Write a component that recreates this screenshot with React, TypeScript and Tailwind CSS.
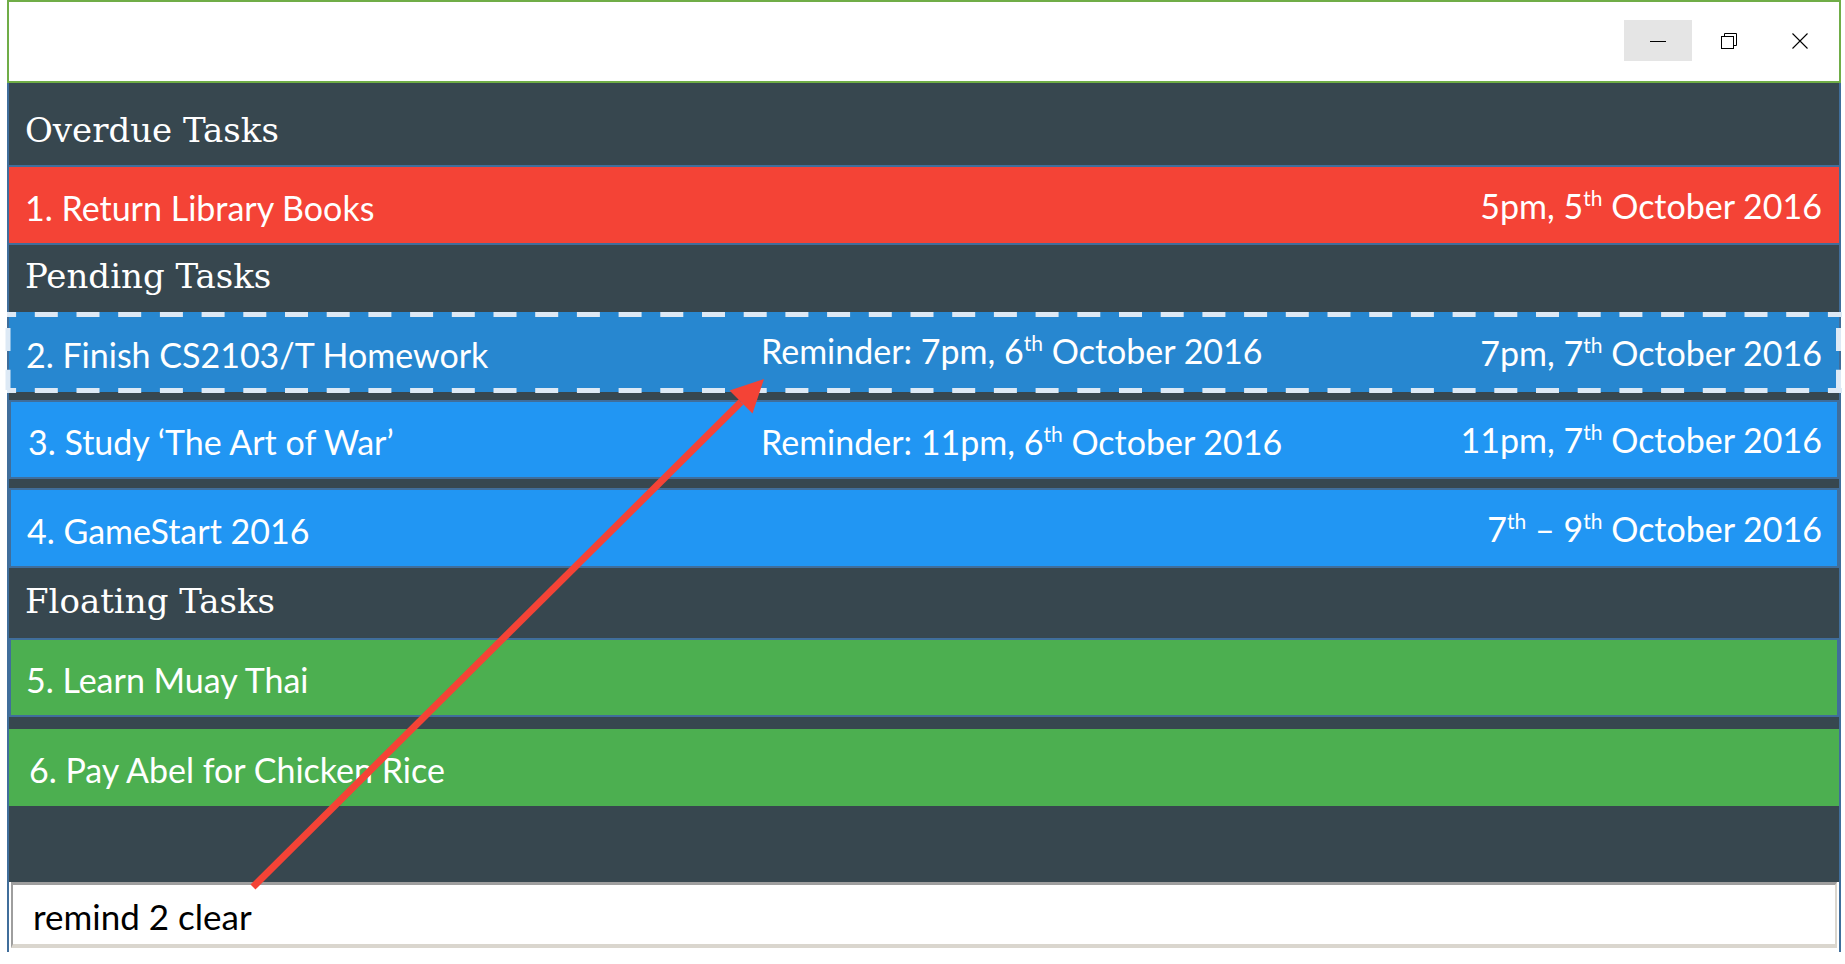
import type { ReactNode } from 'react'

const body = { fontFamily: 'Lato, "Open Sans", sans-serif' }
const slab = { fontFamily: '"DejaVu Serif", "Liberation Serif", serif' }

function Th({ children = 'th' }: { children?: ReactNode }) {
  return <sup className="text-[21px] top-[-0.6em]">{children}</sup>
}

function Header({ title, className }: { title: string; className: string }) {
  return (
    <div className={className}>
      <span className="text-[34px] text-white leading-none" style={slab}>
        {title}
      </span>
    </div>
  )
}

interface RowProps {
  className: string
  label: string
  labelWidth?: string
  reminder?: ReactNode
  due?: ReactNode
}

function Row({ className, label, labelWidth = 'w-[735px]', reminder, due }: RowProps) {
  return (
    <div className={className}>
      <span className={labelWidth + ' shrink-0 translate-y-[2px]'}>{label}</span>
      <span className="flex-1">{reminder}</span>
      <span className="text-right">{due}</span>
    </div>
  )
}

function WindowButtons() {
  return (
    <div className="flex gap-[3px] pt-[18px] pr-[5px]">
      <div className="w-[68px] h-[41px] bg-[#e5e5e5] flex items-center justify-center">
        <svg width="16" height="16" viewBox="0 0 16 16">
          <path d="M0 8.5H16" stroke="#000" strokeWidth="1" />
        </svg>
      </div>
      <div className="w-[68px] h-[41px] flex items-center justify-center">
        <svg width="16" height="16" viewBox="0 0 16 16" fill="none" stroke="#000" strokeWidth="1">
          <rect x="0.5" y="3.5" width="12" height="12" />
          <path d="M3.5 3.5V0.5H15.5V12.5H12.5" />
        </svg>
      </div>
      <div className="w-[68px] h-[41px] flex items-center justify-center">
        <svg width="16" height="16" viewBox="0 0 16 16" fill="none" stroke="#000" strokeWidth="1.1">
          <path d="M0.5 0.5L15.5 15.5M15.5 0.5L0.5 15.5" />
        </svg>
      </div>
    </div>
  )
}

function Annotations() {
  const dash = { stroke: '#dde9f5', strokeWidth: 5, strokeDasharray: '23 18.7' }
  return (
    <svg className="absolute inset-0 pointer-events-none" width="1845" height="964" viewBox="0 0 1845 964">
      <path d="M7 314.5H1842" style={{ ...dash, strokeDashoffset: 13.9 }} />
      <path d="M7 390.5H1842" style={{ ...dash, strokeDashoffset: 13.9 }} />
      <path d="M8 317V390" style={{ ...dash, strokeDashoffset: 30.7 }} />
      <path d="M1838.5 317V390" style={{ ...dash, strokeDashoffset: 30.7 }} />
      <path d="M253 887L741 402" stroke="#f44336" strokeWidth="7" />
      <polygon points="764,379 729.5,390.5 752.5,413.5" fill="#f44336" />
    </svg>
  )
}

export default function App() {
  return (
    <div className="relative w-[1845px] h-[964px] bg-white overflow-hidden" style={body}>
      <div className="ml-[7px] w-[1834px] flex flex-col">
        <div className="h-[83px] border-2 border-[#70ad47] bg-white flex justify-end items-start">
          <WindowButtons />
        </div>

        <div className="border-x-2 border-[#406e9b] bg-[#37474f] flex flex-col text-[34px] text-white">
          <Header title="Overdue Tasks" className="h-[82px] flex items-center pl-4 pt-[11px]" />
          <Row
            className="h-[80px] border-y-2 border-[#406e9b] bg-[#f44336] flex items-center pl-4 pr-[17px]"
            label="1. Return Library Books"
            due={<>5pm, 5<Th /> October 2016</>}
          />
          <Header title="Pending Tasks" className="h-[67px] flex items-center pl-4 pb-[5px]" />
          <Row
            className="h-[80px] bg-[#2787d0] flex items-center pl-[17px] pr-[17px]"
            label="2. Finish CS2103/T Homework"
            reminder={<span className="-translate-y-[2px] inline-block">Reminder: 7pm, 6<Th /> October 2016</span>}
            due={<>7pm, 7<Th /> October 2016</>}
          />
          <div className="h-[8px]" />
          <Row
            className="h-[79px] border-2 border-[#406e9b] bg-[#2196f3] flex items-center pl-[17px] pr-[15px]"
            label="3. Study ‘The Art of War’"
            labelWidth="w-[733px]"
            reminder={<span className="translate-y-[2px] inline-block">Reminder: 11pm, 6<Th /> October 2016</span>}
            due={<>11pm, 7<Th /> October 2016</>}
          />
          <div className="h-[9px]" />
          <Row
            className="h-[80px] border-2 border-[#406e9b] bg-[#2196f3] flex items-center pl-4 pr-[15px]"
            label="4. GameStart 2016"
            due={<>7<Th /> – 9<Th /> October 2016</>}
          />
          <Header title="Floating Tasks" className="h-[70px] flex items-center pl-4 pb-[5px]" />
          <Row
            className="h-[79px] border-2 border-[#406e9b] bg-[#4caf50] flex items-center pl-[15px] pr-[15px]"
            label="5. Learn Muay Thai"
          />
          <div className="h-[12px]" />
          <Row
            className="h-[77px] bg-[#4caf50] flex items-center pl-[20px] pr-[17px]"
            label="6. Pay Abel for Chicken Rice"
          />
          <div className="h-[76px]" />
          <div className="h-[70px] bg-white px-[2px]">
            <div className="h-[66px] bg-white border-t-[3px] border-l-2 border-[#9e9e9e] border-b-4 border-r-2 border-b-[#dad6ce] border-r-[#dad6ce] flex items-center pl-[20px] pt-[4px]">
              <span className="text-[35px] text-black">remind 2 clear</span>
            </div>
          </div>
        </div>
      </div>
      <Annotations />
    </div>
  )
}
